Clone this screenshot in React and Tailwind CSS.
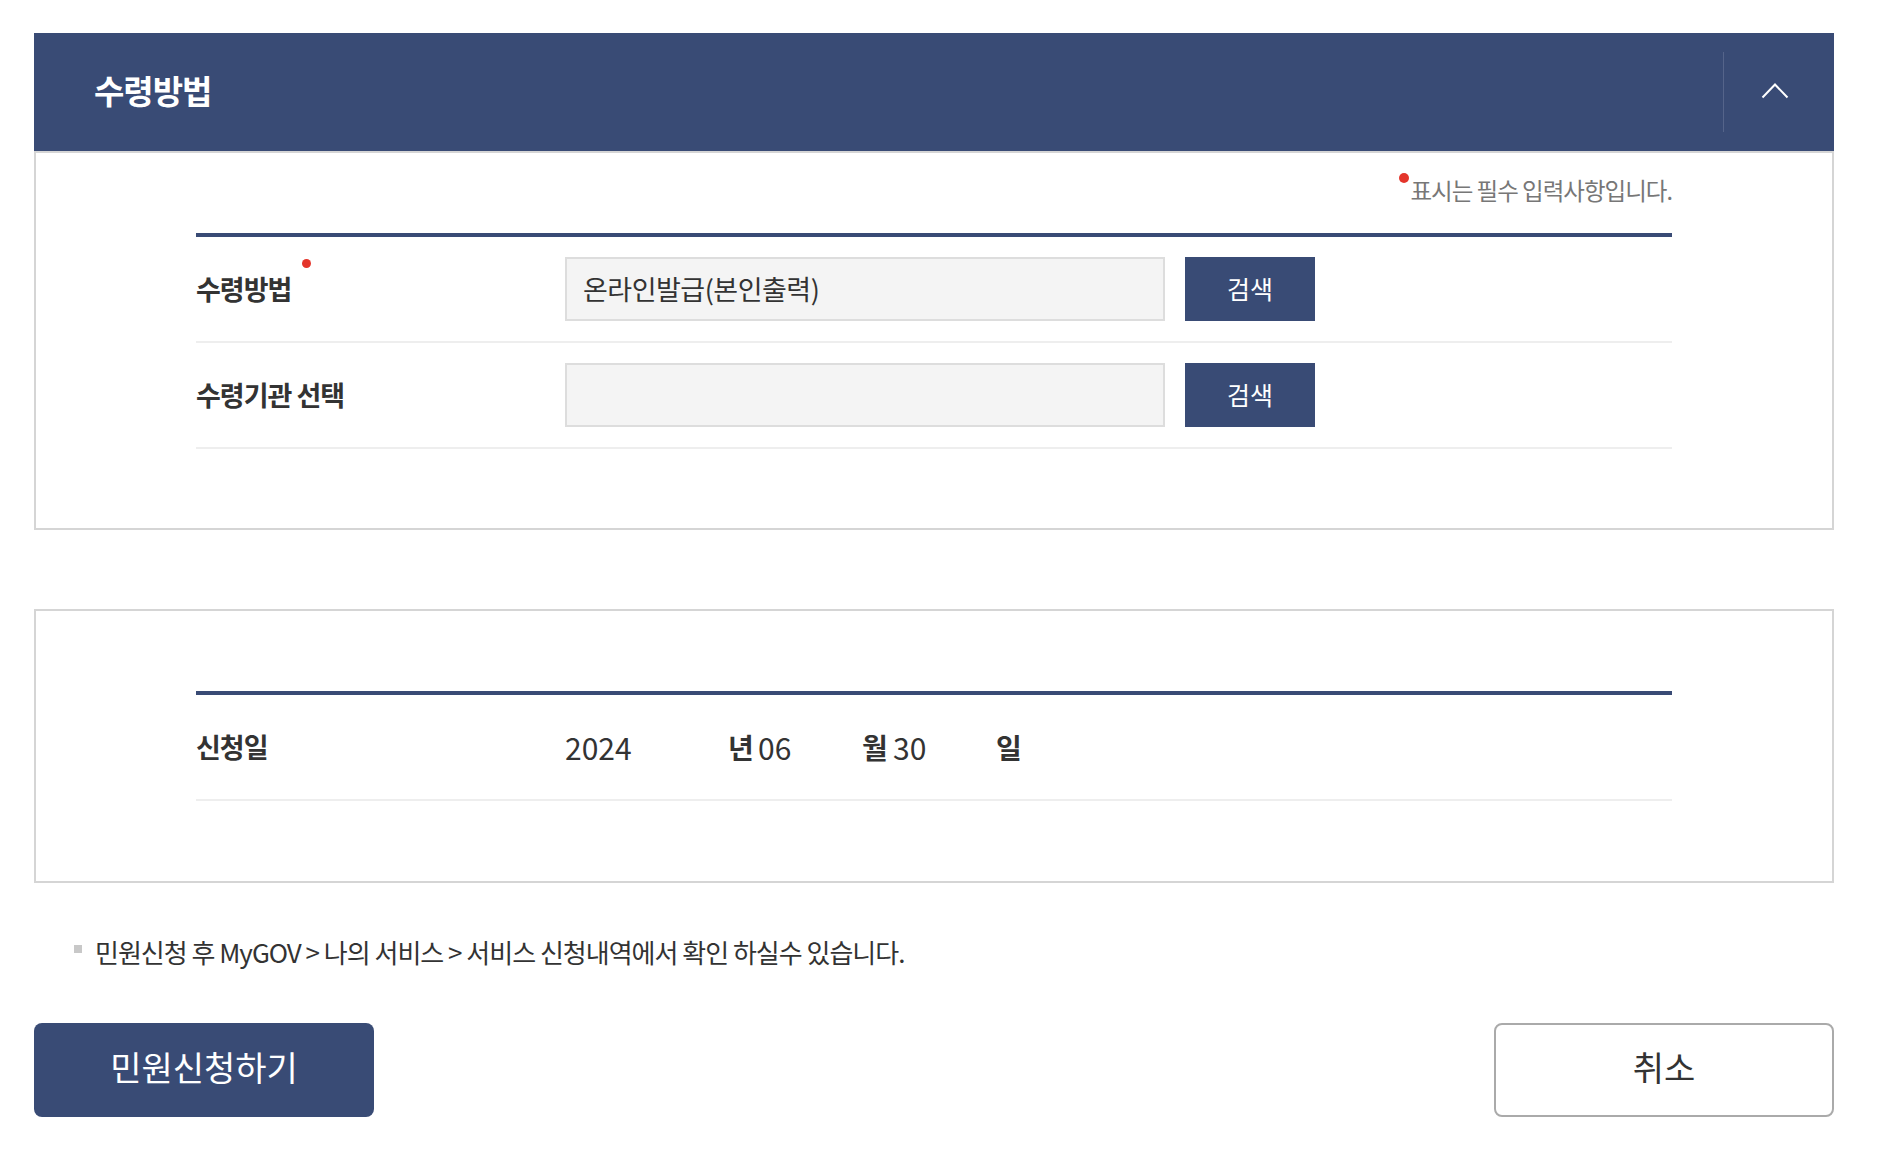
export default function App() {
  const rows = [
    { label: '수령방법', value: '온라인발급(본인출력)', required: true },
    { label: '수령기관 선택', value: '', required: false },
  ];

  return (
    <div className="min-h-screen bg-white font-['Noto_Sans_CJK_KR',sans-serif] text-[#333]">
      <div className="ml-[34px] w-[1800px] pt-[33px] pb-[40px]">
        {/* 수령방법 panel */}
        <section>
          <div className="flex h-[118px] items-center bg-[#394b75]">
            <h2 className="flex-1 pb-[2px] pl-[60px] text-[33px] font-bold tracking-[-1px] text-white">수령방법</h2>
            <button className="flex h-[80px] w-[111px] items-center justify-center border-l border-[#55648a] pr-[8px] pb-[4px]">
              <svg width="28" height="17" viewBox="0 0 28 17" fill="none">
                <path d="M1.5 15.5 L14 2.5 L26.5 15.5" stroke="white" strokeWidth="2" />
              </svg>
            </button>
          </div>
          <div className="border-2 border-[#d5d5d5] px-[160px] pb-[79px]">
            <div className="flex h-[80px] items-center justify-end pb-[5px]">
              <p className="relative text-[23.5px] leading-[33px] tracking-[-1px] text-[#777]">
                <span className="absolute -left-[11px] -top-[1px] h-[10px] w-[10px] rounded-full bg-[#e4352b]" />
                표시는 필수 입력사항입니다.
              </p>
            </div>
            <div className="border-t-4 border-[#394b75]">
              {rows.map((row) => (
                <div key={row.label} className="flex items-center border-b-2 border-[#eee] py-[20px]">
                  <div className="w-[369px]">
                    <span className="relative text-[27px] font-bold tracking-[-1px]">
                      {row.label}
                      {row.required && (
                        <span className="absolute -right-[20px] -top-[10px] h-[9px] w-[9px] rounded-full bg-[#e4352b]" />
                      )}
                    </span>
                  </div>
                  <div className="flex h-[64px] w-[600px] items-center border-2 border-[#ddd] bg-[#f4f4f4] px-[16px] text-[27px] tracking-[-0.5px]">
                    {row.value}
                  </div>
                  <button className="ml-[20px] h-[64px] w-[130px] bg-[#394b75] text-[25px] text-white">검색</button>
                </div>
              ))}
            </div>
          </div>
        </section>

        {/* 신청일 panel */}
        <section className="mt-[79px] border-2 border-[#d5d5d5] px-[160px] py-[80px]">
          <div className="border-t-4 border-[#394b75]">
            <div className="flex h-[106px] items-center border-b-2 border-[#eee]">
              <div className="w-[369px] text-[27px] font-bold tracking-[-1px]">신청일</div>
              <span className="w-[163px] text-[30px]">2024</span>
              <span className="w-[30px] text-[28px] font-bold">년</span>
              <span className="w-[104px] text-[30px]">06</span>
              <span className="w-[31px] text-[28px] font-bold">월</span>
              <span className="w-[103px] text-[30px]">30</span>
              <span className="text-[28px] font-bold">일</span>
            </div>
          </div>
        </section>

        {/* notice */}
        <div className="mt-[50px] flex h-[36px] items-center pl-[40px]">
          <span className="mb-[4px] h-[8px] w-[8px] bg-[#c8c8c8]" />
          <p className="ml-[13px] text-[26px] tracking-[-1px]">
            민원신청 후 MyGOV &gt; 나의 서비스 &gt; 서비스 신청내역에서 확인 하실수 있습니다.
          </p>
        </div>

        {/* actions */}
        <div className="mt-[54px] flex justify-between">
          <button className="h-[94px] w-[340px] rounded-[8px] bg-[#394b75] pb-[8px] text-[34px] text-white">민원신청하기</button>
          <button className="h-[94px] w-[340px] rounded-[8px] border-2 border-[#aaa] bg-white pb-[8px] text-[34px] text-[#333]">취소</button>
        </div>
      </div>
    </div>
  );
}
